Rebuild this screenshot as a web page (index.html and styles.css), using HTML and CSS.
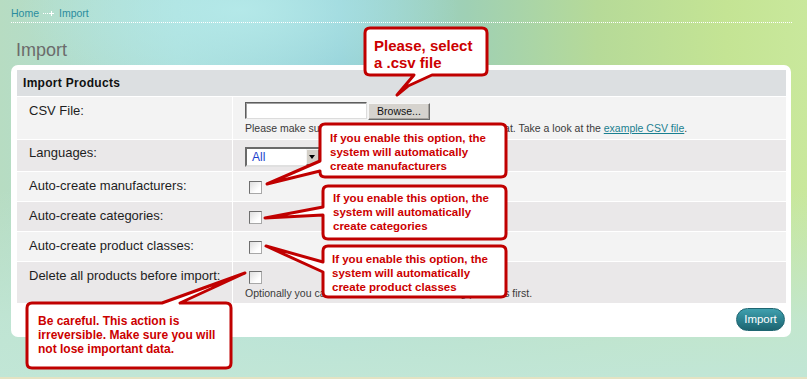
FILE: index.html
```html
<!DOCTYPE html>
<html lang="en">
<head>
<meta charset="utf-8">
<title>Import</title>
<link rel="stylesheet" href="styles.css">
</head>
<body>
<div class="page">
  <div class="crumbs">
    <a href="#">Home</a>
    <svg class="sep" width="12" height="7" viewBox="0 0 12 7"><rect x="0" y="3" width="1" height="1"/><rect x="2" y="3" width="1" height="1"/><rect x="4" y="3" width="1" height="1"/><rect x="6" y="3" width="5" height="1"/><rect x="8" y="1" width="1" height="5"/></svg>
    <a href="#">Import</a>
  </div>
  <h1 class="title">Import</h1>
  <div class="panel">
    <div class="form">
      <div class="head">Import Products</div>

      <div class="lab light">CSV File:</div>
      <div class="val light first">
        <div class="file"><span class="file-input"></span><span class="browse">Browse...</span></div>
        <div class="hint">Please make sure that the CSV file has the correct format. Take a look at the <a href="#">example CSV file</a>.</div>
      </div>

      <div class="lab dark lang">Languages:</div>
      <div class="val dark sel">
        <div class="select"><span class="sel-text">All</span><span class="sel-arrow"></span></div>
      </div>

      <div class="lab light">Auto-create manufacturers:</div>
      <div class="val light"><span class="check"></span></div>

      <div class="lab dark">Auto-create categories:</div>
      <div class="val dark"><span class="check"></span></div>

      <div class="lab light">Auto-create product classes:</div>
      <div class="val light"><span class="check"></span></div>

      <div class="lab dark">Delete all products before import:</div>
      <div class="val dark">
        <span class="check"></span>
        <div class="hint">Optionally you can also delete all of the existing products first.</div>
      </div>
    </div>
    <div class="actions"><button class="btn" type="button">Import</button></div>
  </div>
</div>

<svg class="callouts" width="807" height="379" viewBox="0 0 807 379">
  <path d="M370,28 H482 Q487,28 487,33 V70 Q487,75 482,75 H432 L408,86 L397,95 L414,75 H370 Q365,75 365,70 V33 Q365,28 370,28 Z"/>
  <path d="M325,124 H501 Q506,124 506,129 V172 Q506,177 501,177 H325 Q320,177 320,172 V171 L267,184 L320,161 V129 Q320,124 325,124 Z"/>
  <path d="M328,186 H501 Q506,186 506,191 V234 Q506,239 501,239 H328 Q323,239 323,234 V215 L265,218 L323,207 V191 Q323,186 328,186 Z"/>
  <path d="M328,246 H501 Q506,246 506,251 V292 Q506,297 501,297 H328 Q323,297 323,292 V272 L266,246 L323,262 V251 Q323,246 328,246 Z"/>
  <path d="M32,303 H162 L245,273 L180,303 H226 Q231,303 231,308 V363 Q231,368 226,368 H32 Q27,368 27,363 V308 Q27,303 32,303 Z"/>
</svg>
<div class="note n1">Please, select<br>a .csv file</div>
<div class="note n2">If you enable this option, the<br>system will automatically<br>create manufacturers</div>
<div class="note n3">If you enable this option, the<br>system will automatically<br>create categories</div>
<div class="note n4">If you enable this option, the<br>system will automatically<br>create product classes</div>
<div class="note n5">Be careful. This action is<br>irreversible. Make sure you will<br>not lose important data.</div>
</body>
</html>
```

FILE: styles.css
```css
html, body {
  margin: 0;
  padding: 0;
}

body {
  position: relative;
  width: 807px;
  height: 379px;
  overflow: hidden;
  font-family: "Liberation Sans", Arial, sans-serif;
  background:
    linear-gradient(to top, #e4e2c2 0, #e4e2c2 2px, rgba(0,0,0,0) 2px),
    linear-gradient(to bottom, rgba(193,230,214,0) 0%, rgba(193,230,214,0) 50%, rgba(193,230,214,0.85) 85%, #c1e6d6 100%),
    radial-gradient(ellipse 220px 90px at 240px 10px, rgba(182,234,234,0.9), rgba(182,234,234,0)),
    linear-gradient(to right, #b7dcc2 0%, #abdfdc 22%, #93d0d8 42%, #9fd0b4 58%, #b6da98 74%, #c4e494 90%, #c9e89c 100%);
}

.page {
  padding: 6px 15px 0 11px;
}

.crumbs {
  display: flex;
  align-items: center;
  gap: 4px;
  height: 14px;
  font-size: 10.5px;
  line-height: 14px;
  padding-bottom: 2px;
  border-bottom: 1px dotted #ffffff;
}

.crumbs a {
  color: #2a8c9e;
  text-decoration: none;
}

.sep {
  fill: #ffffff;
}

.title {
  margin: 17px 0 4px 5px;
  font-size: 18px;
  line-height: 21px;
  font-weight: normal;
  color: #6b6b6b;
}

.panel {
  width: 780px;
  box-sizing: border-box;
  background: #ffffff;
  border-radius: 7px;
  padding: 5px 5px 6px 6px;
}

.form {
  display: grid;
  grid-template-columns: 215px 1fr;
  grid-template-rows: 26px 42px 31px 29px 29px 29px 41px;
  gap: 1px;
}

.head {
  grid-column: 1 / -1;
  background: #dcdfe1;
  font-weight: bold;
  font-size: 12px;
  line-height: 26px;
  padding-left: 6px;
  color: #111111;
  letter-spacing: 0.3px;
}

.light { background: #f3f3f3; }
.dark { background: #eae8e9; }

.lab {
  padding: 6px 0 0 12px;
  font-size: 13px;
  line-height: 16px;
  color: #1e1e1e;
}

.lab.lang { padding-top: 5px; }

.val {
  padding: 6px 0 0 12px;
}

.val.first { padding-top: 5px; }
.val.sel { padding-top: 7px; }

.file {
  display: flex;
  align-items: flex-start;
}

.file-input {
  display: block;
  width: 122px;
  height: 17px;
  box-sizing: border-box;
  background: #ffffff;
  border: 1px solid;
  border-color: #5e5e5e #dcdcdc #dcdcdc #5e5e5e;
  box-shadow: inset 1px 1px 0 #a0a0a0;
}

.browse {
  display: block;
  width: 62px;
  height: 17px;
  margin: 1px 0 0 1px;
  box-sizing: border-box;
  background: #d6d3ce;
  border: 1px solid;
  border-color: #f6f6f6 #6a6a6a #6a6a6a #f6f6f6;
  box-shadow: inset -1px -1px 0 #a6a39e;
  font-size: 10.5px;
  line-height: 15px;
  text-align: center;
  color: #111111;
}

.hint {
  margin-top: 1px;
  font-size: 10.5px;
  line-height: 14px;
  color: #3a3a3a;
}

.hint a {
  color: #1a7f90;
  text-decoration: underline;
}

.select {
  display: flex;
  width: 76px;
  height: 20px;
  box-sizing: border-box;
  background: #ffffff;
  border: 2px solid;
  border-color: #6a6a6a #e0e0e0 #e0e0e0 #6a6a6a;
}

.sel-text {
  flex: 1;
  padding-left: 5px;
  font-size: 12px;
  line-height: 16px;
  color: #1c3fcc;
}

.sel-arrow {
  position: relative;
  width: 13px;
  height: 16px;
  box-sizing: border-box;
  background: #d4d0c8;
  border: 1px solid;
  border-color: #f4f4f4 #6a6a6a #6a6a6a #f4f4f4;
}

.sel-arrow::after {
  content: "";
  position: absolute;
  left: 2px;
  top: 5px;
  border-left: 3.5px solid transparent;
  border-right: 3.5px solid transparent;
  border-top: 4px solid #000000;
}

.check {
  display: block;
  width: 13px;
  height: 13px;
  margin: 3px 0 2px 4px;
  box-sizing: border-box;
  border: 1px solid;
  border-color: #6e6e6e #a8a8a8 #a8a8a8 #6e6e6e;
  background: linear-gradient(135deg, #dedede, #ffffff 70%);
}

.actions {
  display: flex;
  justify-content: flex-end;
  margin-top: 5px;
  padding-right: 1px;
}

.btn {
  width: 49px;
  height: 23px;
  padding: 0;
  border: 1px solid #1f6672;
  border-radius: 12px;
  background: linear-gradient(#40a0ae, #2a7f8d 55%, #1d6470);
  color: #ffffff;
  font-family: "Liberation Sans", Arial, sans-serif;
  font-size: 11.5px;
  line-height: 21px;
}

.callouts {
  position: absolute;
  left: 0;
  top: 0;
  pointer-events: none;
}

.callouts path {
  fill: #ffffff;
  stroke: #c00000;
  stroke-width: 3;
  stroke-linejoin: round;
}

.note {
  position: absolute;
  color: #cc0000;
  font-weight: bold;
  font-size: 11.5px;
  line-height: 14px;
  white-space: nowrap;
}

.n1 { left: 374px; top: 37px; font-size: 15px; line-height: 17px; }
.n2 { left: 330px; top: 131px; }
.n3 { left: 333px; top: 191px; }
.n4 { left: 332px; top: 252px; }
.n5 { left: 38px; top: 314px; font-size: 12px; }
```
